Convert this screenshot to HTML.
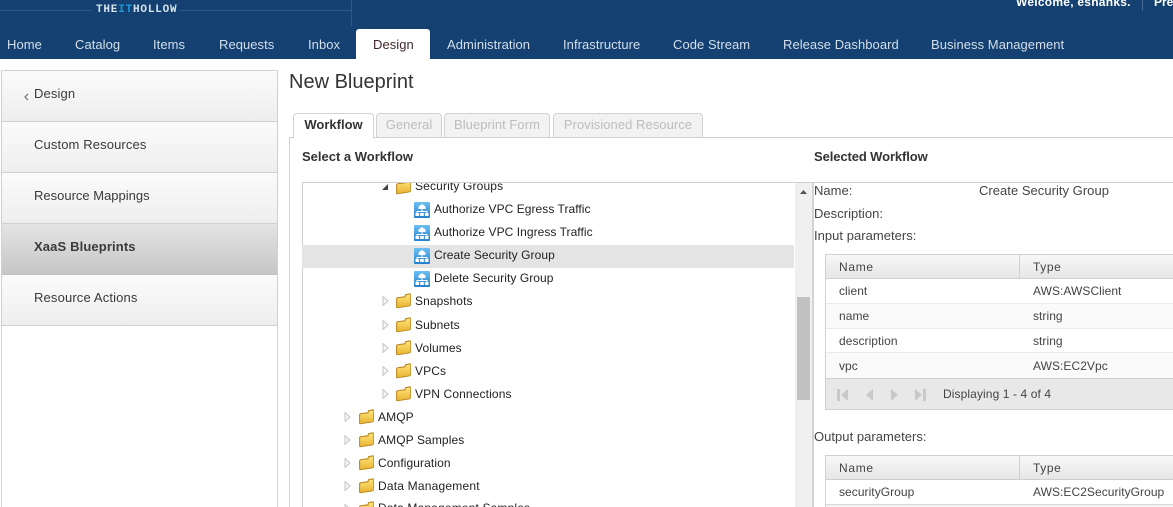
<!DOCTYPE html>
<html><head><meta charset="utf-8"><style>
*{box-sizing:border-box}
html,body{margin:0;padding:0;width:1173px;height:507px;overflow:hidden;background:#fff;font-family:"Liberation Sans",Arial,sans-serif;font-size:12px;color:#333}
.a{position:absolute}
.t{position:absolute;white-space:nowrap;line-height:16px;height:16px}
.n{color:#d4dfea;font-size:13px;top:37px;letter-spacing:.05px}
.m{position:absolute;left:1px;width:277px;background:linear-gradient(#fbfbfb,#eeeeee);border-bottom:1px solid #d0d0d0}
.s{color:#3a3a3a;left:34px;font-size:13px;letter-spacing:.12px}
.r{color:#222;letter-spacing:.1px}
.c{color:#444;letter-spacing:.05px}
.d{color:#444;font-size:13px;letter-spacing:.03px}
.tab{position:absolute;top:113px;height:24px;border:1px solid #d2d2d2;border-bottom:0;border-radius:4px 4px 0 0;background:#f2f2f2;color:#bdbdbd;text-align:center;line-height:22px;font-size:13px;letter-spacing:.05px}
</style></head><body>
<svg width="0" height="0" style="position:absolute"><defs>
<linearGradient id="fg" x1="0" y1="0" x2="0" y2="1"><stop offset="0" stop-color="#ffe47a"/><stop offset="1" stop-color="#e9b432"/></linearGradient>
<linearGradient id="wg" x1="0" y1="0" x2="0" y2="1"><stop offset="0" stop-color="#6cc0f0"/><stop offset="1" stop-color="#2580cc"/></linearGradient>
<symbol id="f" viewBox="0 0 16 16"><path d="M1 6.500 L1 14 Q1 15.500 3 15.200 L13.500 13.500 Q15 13.200 15 12 L15 2 Q15 1 13.500 1.300 L9.500 2.100 L9 4 L3 4.800 Q1 5 1 6.500Z" fill="#b98820"/><path d="M2 7 L2 14.500 L14.300 12.500 L14.300 2.200 L10.300 3 L9.800 5 L3 5.800 Q2 6 2 7Z" fill="url(#fg)"/></symbol>
<symbol id="w" viewBox="0 0 16 16"><rect width="16" height="16" rx="1" fill="url(#wg)"/><path d="M8 2 L11.500 4.500 L11.500 7 L4.500 7 L4.500 4.500Z" fill="#fff"/><path d="M8 7 V9.500 M3 11 V9.500 H13 V11" stroke="#fff" fill="none"/><rect x="1.500" y="11" width="3.600" height="3" fill="#fff"/><rect x="6.200" y="11" width="3.600" height="3" fill="#fff"/><rect x="10.900" y="11" width="3.600" height="3" fill="#fff"/></symbol>
<symbol id="e" viewBox="0 0 7 10"><path d="M1 0.500 L6 5 L1 9.500Z" fill="#f6f6f6" stroke="#c4c4c4"/></symbol>
</defs></svg>

<!-- header -->
<div class="a" style="left:0;top:0;width:1173px;height:59px;background:#144171"></div>
<div class="a" style="left:0;top:10px;width:352px;height:1px;background:#2d5785"></div>
<div class="a" style="left:351px;top:0;width:1px;height:26px;background:#2d5785"></div>
<div class="a" style="left:92px;top:4px;width:87px;height:12px;background:#144171"></div>
<div class="t" style="left:96px;top:2px;font:bold 11px/16px 'Liberation Mono',monospace;color:#d8e4ee;letter-spacing:.8px">THE<span style="color:#1d9ad6">IT</span>HOLLOW</div>
<div class="t" style="left:1016px;top:-6px;color:#fff;font-weight:bold;font-size:12px;letter-spacing:.25px">Welcome, eshanks.</div>
<div class="a" style="left:1142px;top:0;width:1px;height:10px;background:#4a6d94"></div>
<div class="t" style="left:1154px;top:-6px;color:#fff;font-weight:bold;font-size:12px">Pre</div>
<div class="t n" style="left:7px">Home</div>
<div class="t n" style="left:75px">Catalog</div>
<div class="t n" style="left:153px">Items</div>
<div class="t n" style="left:219px">Requests</div>
<div class="t n" style="left:308px">Inbox</div>
<div class="a" style="left:356px;top:29px;width:74px;height:30px;background:#fff;border-radius:3px 3px 0 0"></div>
<div class="t n" style="left:373px;color:#40282a">Design</div>
<div class="t n" style="left:447px">Administration</div>
<div class="t n" style="left:563px">Infrastructure</div>
<div class="t n" style="left:673px">Code Stream</div>
<div class="t n" style="left:783px">Release Dashboard</div>
<div class="t n" style="left:931px">Business Management</div>

<!-- sidebar -->
<div class="a" style="left:1px;top:70px;width:277px;height:437px;border:1px solid #d0d0d0;border-bottom:0;border-radius:3px 3px 0 0"></div>
<div class="m" style="top:71px;height:51px"></div>
<div class="m" style="top:122px;height:51px"></div>
<div class="m" style="top:173px;height:51px"></div>
<div class="m" style="top:224px;height:51px;background:linear-gradient(#e4e4e4,#c6c6c6);border-bottom:1px solid #c0c0c0"></div>
<div class="m" style="top:275px;height:51px"></div>
<div class="a" style="left:1px;top:70px;width:1px;height:437px;background:#d0d0d0"></div>
<div class="a" style="left:277px;top:70px;width:1px;height:437px;background:#d0d0d0"></div>
<svg class="a" style="left:24px;top:93px" width="5" height="8"><path d="M4 1 L1 4 L4 7" fill="none" stroke="#666" stroke-width="1.100"/></svg>
<div class="t s" style="top:86px">Design</div>
<div class="t s" style="top:137px;letter-spacing:.12px">Custom Resources</div>
<div class="t s" style="top:188px;letter-spacing:0">Resource Mappings</div>
<div class="t s" style="top:239px;font-weight:bold;letter-spacing:.13px">XaaS Blueprints</div>
<div class="t s" style="top:290px;letter-spacing:.15px">Resource Actions</div>

<!-- title -->
<div class="t" style="left:289px;top:70px;height:24px;font-size:20px;line-height:24px;color:#333">New Blueprint</div>

<!-- tabs -->
<div class="a" style="left:289px;top:137px;width:884px;height:370px;border:1px solid #d0d0d0;border-right:0;border-bottom:0"></div>
<div class="tab" style="left:293px;width:81px;height:25px;background:#fff;color:#333;font-weight:bold;z-index:2;letter-spacing:0">Workflow</div>
<div class="tab" style="left:376px;width:66px">General</div>
<div class="tab" style="left:444px;width:106px">Blueprint Form</div>
<div class="tab" style="left:553px;width:150px">Provisioned Resource</div>
<div class="t" style="left:302px;top:149px;font-weight:bold;font-size:13px;color:#333">Select a Workflow</div>
<div class="t" style="left:814px;top:149px;font-weight:bold;font-size:13px;letter-spacing:-.1px;color:#333">Selected Workflow</div>

<!-- tree box -->
<div class="a" style="left:302px;top:182px;width:871px;height:1px;background:#cfcfcf"></div>
<div class="a" style="left:302px;top:182px;width:1px;height:325px;background:#cfcfcf"></div>
<div class="a" style="left:795px;top:183px;width:17px;height:324px;background:#f0f0f0"></div>
<div class="a" style="left:797px;top:297px;width:13px;height:103px;background:#c1c1c1"></div>
<svg class="a" style="left:799px;top:189px" width="9" height="6"><path d="M4.500 1 L8 5 H1Z" fill="#505050"/></svg>
<div class="a" style="left:812px;top:183px;width:2px;height:324px;background:#d4d4d4"></div>
<div class="a" style="left:302px;top:245px;width:492px;height:23px;background:#e4e4e4"></div>

<div class="a" style="left:303px;top:183px;width:491px;height:324px;overflow:hidden">
<svg class="a" style="left:78px;top:0" width="8" height="8"><path d="M7 1 V7 H1Z" fill="#444"/></svg>
<svg class="a" style="left:92px;top:-5px" width="17" height="17"><use href="#f"/></svg>
<div class="t r" style="left:112px;top:-5px;letter-spacing:.15px">Security Groups</div>

<svg class="a" style="left:111px;top:19px" width="16" height="16"><use href="#w"/></svg>
<div class="t r" style="left:131px;top:18px;letter-spacing:.05px">Authorize VPC Egress Traffic</div>
<svg class="a" style="left:111px;top:42px" width="16" height="16"><use href="#w"/></svg>
<div class="t r" style="left:131px;top:41px;letter-spacing:.05px">Authorize VPC Ingress Traffic</div>
<svg class="a" style="left:111px;top:65px" width="16" height="16"><use href="#w"/></svg>
<div class="t r" style="left:131px;top:64px;letter-spacing:.07px">Create Security Group</div>
<svg class="a" style="left:111px;top:88px" width="16" height="16"><use href="#w"/></svg>
<div class="t r" style="left:131px;top:87px;letter-spacing:.07px">Delete Security Group</div>

<svg class="a" style="left:79px;top:113px" width="7" height="10"><use href="#e"/></svg>
<svg class="a" style="left:92px;top:109px" width="17" height="17"><use href="#f"/></svg>
<div class="t r" style="left:112px;top:110px">Snapshots</div>
<svg class="a" style="left:79px;top:137px" width="7" height="10"><use href="#e"/></svg>
<svg class="a" style="left:92px;top:133px" width="17" height="17"><use href="#f"/></svg>
<div class="t r" style="left:112px;top:134px">Subnets</div>
<svg class="a" style="left:79px;top:160px" width="7" height="10"><use href="#e"/></svg>
<svg class="a" style="left:92px;top:156px" width="17" height="17"><use href="#f"/></svg>
<div class="t r" style="left:112px;top:157px">Volumes</div>
<svg class="a" style="left:79px;top:183px" width="7" height="10"><use href="#e"/></svg>
<svg class="a" style="left:92px;top:179px" width="17" height="17"><use href="#f"/></svg>
<div class="t r" style="left:112px;top:180px">VPCs</div>
<svg class="a" style="left:79px;top:206px" width="7" height="10"><use href="#e"/></svg>
<svg class="a" style="left:92px;top:202px" width="17" height="17"><use href="#f"/></svg>
<div class="t r" style="left:112px;top:203px;letter-spacing:.13px">VPN Connections</div>

<svg class="a" style="left:41px;top:229px" width="7" height="10"><use href="#e"/></svg>
<svg class="a" style="left:55px;top:225px" width="17" height="17"><use href="#f"/></svg>
<div class="t r" style="left:75px;top:226px">AMQP</div>
<svg class="a" style="left:41px;top:252px" width="7" height="10"><use href="#e"/></svg>
<svg class="a" style="left:55px;top:248px" width="17" height="17"><use href="#f"/></svg>
<div class="t r" style="left:75px;top:249px">AMQP Samples</div>
<svg class="a" style="left:41px;top:275px" width="7" height="10"><use href="#e"/></svg>
<svg class="a" style="left:55px;top:271px" width="17" height="17"><use href="#f"/></svg>
<div class="t r" style="left:75px;top:272px">Configuration</div>
<svg class="a" style="left:41px;top:298px" width="7" height="10"><use href="#e"/></svg>
<svg class="a" style="left:55px;top:294px" width="17" height="17"><use href="#f"/></svg>
<div class="t r" style="left:75px;top:295px;letter-spacing:.2px">Data Management</div>
<svg class="a" style="left:41px;top:321px" width="7" height="10"><use href="#e"/></svg>
<svg class="a" style="left:55px;top:317px" width="17" height="17"><use href="#f"/></svg>
<div class="t r" style="left:75px;top:317px;letter-spacing:.15px">Data Management Samples</div>
</div>

<!-- details -->
<div class="t d" style="left:814px;top:183px">Name:</div>
<div class="t d" style="left:979px;top:183px">Create Security Group</div>
<div class="t d" style="left:814px;top:206px">Description:</div>
<div class="t d" style="left:814px;top:228px">Input parameters:</div>

<!-- input grid -->
<div class="a" style="left:825px;top:254px;width:348px;height:156px;border:1px solid #d0d0d0;border-right:0;background:#fff"></div>
<div class="a" style="left:826px;top:255px;width:347px;height:24px;background:linear-gradient(#f8f8f8,#e6e6e6);border-bottom:1px solid #cfcfcf"></div>
<div class="a" style="left:1019px;top:255px;width:1px;height:24px;background:#d0d0d0"></div>
<div class="t c" style="left:839px;top:259px;letter-spacing:.7px">Name</div>
<div class="t c" style="left:1033px;top:259px;letter-spacing:.6px">Type</div>
<div class="a" style="left:826px;top:279px;width:347px;height:25px;background:#fff;border-bottom:1px solid #ececec"></div>
<div class="a" style="left:826px;top:304px;width:347px;height:25px;background:#fafafa;border-bottom:1px solid #ececec"></div>
<div class="a" style="left:826px;top:329px;width:347px;height:24px;background:#fff;border-bottom:1px solid #ececec"></div>
<div class="a" style="left:826px;top:353px;width:347px;height:25px;background:#fafafa"></div>
<div class="t c" style="left:839px;top:283px">client</div><div class="t c" style="left:1033px;top:283px">AWS:AWSClient</div>
<div class="t c" style="left:839px;top:308px">name</div><div class="t c" style="left:1033px;top:308px">string</div>
<div class="t c" style="left:839px;top:333px">description</div><div class="t c" style="left:1033px;top:333px">string</div>
<div class="t c" style="left:839px;top:358px">vpc</div><div class="t c" style="left:1033px;top:358px">AWS:EC2Vpc</div>
<div class="a" style="left:826px;top:378px;width:347px;height:31px;background:#e8e8e8;border-top:1px solid #cfcfcf"></div>
<svg class="a" style="left:836px;top:388px" width="100" height="14" fill="#c9c9c9">
<path d="M1 1 H4 V13 H1Z M12 1 V13 L5 7Z"/><path d="M37 1 V13 L30 7Z"/><path d="M55 1 V13 L62 7Z"/><path d="M79 1 L86 7 L79 13Z M87 1 H90 V13 H87Z"/></svg>
<div class="t c" style="left:943px;top:386px;letter-spacing:.1px">Displaying 1 - 4 of 4</div>

<div class="t d" style="left:814px;top:429px">Output parameters:</div>

<!-- output grid -->
<div class="a" style="left:825px;top:455px;width:348px;height:52px;border:1px solid #d0d0d0;border-right:0;border-bottom:0;background:#fff"></div>
<div class="a" style="left:826px;top:456px;width:347px;height:24px;background:linear-gradient(#f8f8f8,#e6e6e6);border-bottom:1px solid #cfcfcf"></div>
<div class="a" style="left:1019px;top:456px;width:1px;height:24px;background:#d0d0d0"></div>
<div class="t c" style="left:839px;top:460px;letter-spacing:.7px">Name</div>
<div class="t c" style="left:1033px;top:460px;letter-spacing:.6px">Type</div>
<div class="t c" style="left:839px;top:484px">securityGroup</div>
<div class="t c" style="left:1033px;top:484px">AWS:EC2SecurityGroup</div>
<div class="a" style="left:826px;top:504px;width:347px;height:3px;background:#f4f4f4;border-top:1px solid #d8d8d8"></div>
</body></html>
